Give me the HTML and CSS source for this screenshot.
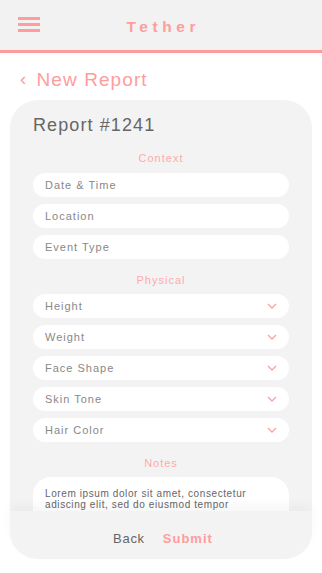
FILE: index.html
```html
<!DOCTYPE html>
<html>
<head>
<meta charset="utf-8">
<link rel="stylesheet" href="styles.css">
</head>
<body>
<header class="topbar">
  <div class="burger"><span></span><span></span><span></span></div>
  <div class="brand">Tether</div>
  <div></div>
</header>
<div class="crumb"><span class="crumb-arrow">‹</span>New Report</div>
<main class="card">
  <div class="card-body">
    <h1 class="report-title">Report #1241</h1>
    <div class="section-label">Context</div>
    <div class="field">Date &amp; Time</div>
    <div class="field">Location</div>
    <div class="field">Event Type</div>
    <div class="section-label tight">Physical</div>
    <div class="field select">Height<svg class="chev" viewBox="0 0 10 6"><polyline points="1,1 5,5 9,1"/></svg></div>
    <div class="field select">Weight<svg class="chev" viewBox="0 0 10 6"><polyline points="1,1 5,5 9,1"/></svg></div>
    <div class="field select">Face Shape<svg class="chev" viewBox="0 0 10 6"><polyline points="1,1 5,5 9,1"/></svg></div>
    <div class="field select">Skin Tone<svg class="chev" viewBox="0 0 10 6"><polyline points="1,1 5,5 9,1"/></svg></div>
    <div class="field select">Hair Color<svg class="chev" viewBox="0 0 10 6"><polyline points="1,1 5,5 9,1"/></svg></div>
    <div class="section-label">Notes</div>
    <div class="notes">Lorem ipsum dolor sit amet, consectetur adiscing elit, sed do eiusmod tempor incididunt ut labore et dolore magna aliqua.</div>
  </div>
  <footer class="card-foot">
    <span class="btn-back">Back</span>
    <span class="btn-submit">Submit</span>
  </footer>
</main>
</body>
</html>
```
FILE: styles.css
```css
* { box-sizing: border-box; }
html, body { margin: 0; padding: 0; }
body {
  width: 322px;
  height: 573px;
  background: #ffffff;
  font-family: "Liberation Sans", Arial, sans-serif;
  overflow: hidden;
}
.topbar {
  height: 53px;
  background: #f2f2f2;
  border-bottom: 3px solid #ff9a9a;
  display: grid;
  grid-template-columns: 1fr auto 1fr;
  align-items: center;
  padding: 0 18px;
}
.burger {
  display: flex;
  flex-direction: column;
  gap: 3px;
  width: 22px;
  margin-top: -1px;
}
.burger span {
  display: block;
  height: 3px;
  background: #ff9c9c;
}
.brand {
  color: #ff9c9c;
  font-weight: bold;
  font-size: 15.5px;
  letter-spacing: 4.6px;
  margin-right: -4.6px;
  margin-top: 4px;
}
.crumb {
  height: 47px;
  display: flex;
  align-items: center;
  padding-left: 20px;
  color: #ff9c9c;
  font-size: 19px;
  letter-spacing: 1.1px;
  padding-top: 7px;
}
.crumb-arrow {
  margin-right: 9px;
  font-size: 19px;
  position: relative;
  top: -1px;
}
.card {
  margin: 0 10px;
  height: 459px;
  background: #f3f3f3;
  border-radius: 28px;
  display: flex;
  flex-direction: column;
}
.card-body {
  flex: 1;
  min-height: 0;
  overflow: hidden;
  padding: 14px 23px 0;
  display: flex;
  flex-direction: column;
}
.report-title {
  margin: 0 0 16px;
  font-weight: normal;
  font-size: 18px;
  line-height: 22px;
  color: #666666;
  letter-spacing: 1.1px;
}
.section-label {
  text-align: center;
  color: #ffaaaa;
  font-size: 11px;
  line-height: 13px;
  letter-spacing: 1px;
  margin-bottom: 8px;
}
.section-label.tight { margin-bottom: 7px; }
.field {
  height: 24px;
  flex: none;
  background: #ffffff;
  border-radius: 12px;
  margin-bottom: 7px;
  padding: 0 12px;
  display: flex;
  align-items: center;
  justify-content: space-between;
  color: #888888;
  font-size: 11px;
  letter-spacing: 1px;
}
.field + .section-label { margin-top: 8px; }
.chev {
  width: 10px;
  height: 6px;
  fill: none;
  stroke: #ffa0a0;
  stroke-width: 1.3;
}
.notes {
  flex: none;
  background: #ffffff;
  border-radius: 18px;
  padding: 11px 12px 20px;
  color: #666666;
  font-size: 10px;
  line-height: 11px;
  letter-spacing: 0.6px;
  height: 80px;
}
.section-label + .notes { margin-top: -1px; }
.card-foot {
  position: relative;
  height: 48px;
  flex: none;
  border-radius: 0 0 28px 28px;
  background: linear-gradient(to bottom, rgba(243,243,243,0.35) 0px, rgba(243,243,243,0.8) 6px, #f3f3f3 14px);
  box-shadow: 0 -6px 12px rgba(0,0,0,0.035);
  display: flex;
  justify-content: center;
  align-items: center;
  gap: 18px;
  font-size: 13px;
  padding-top: 7px;
  padding-left: 4px;
}
.btn-back {
  color: #666666;
  letter-spacing: 0.7px;
}
.btn-submit {
  color: #ff9c9c;
  font-weight: bold;
  letter-spacing: 1px;
}
```
